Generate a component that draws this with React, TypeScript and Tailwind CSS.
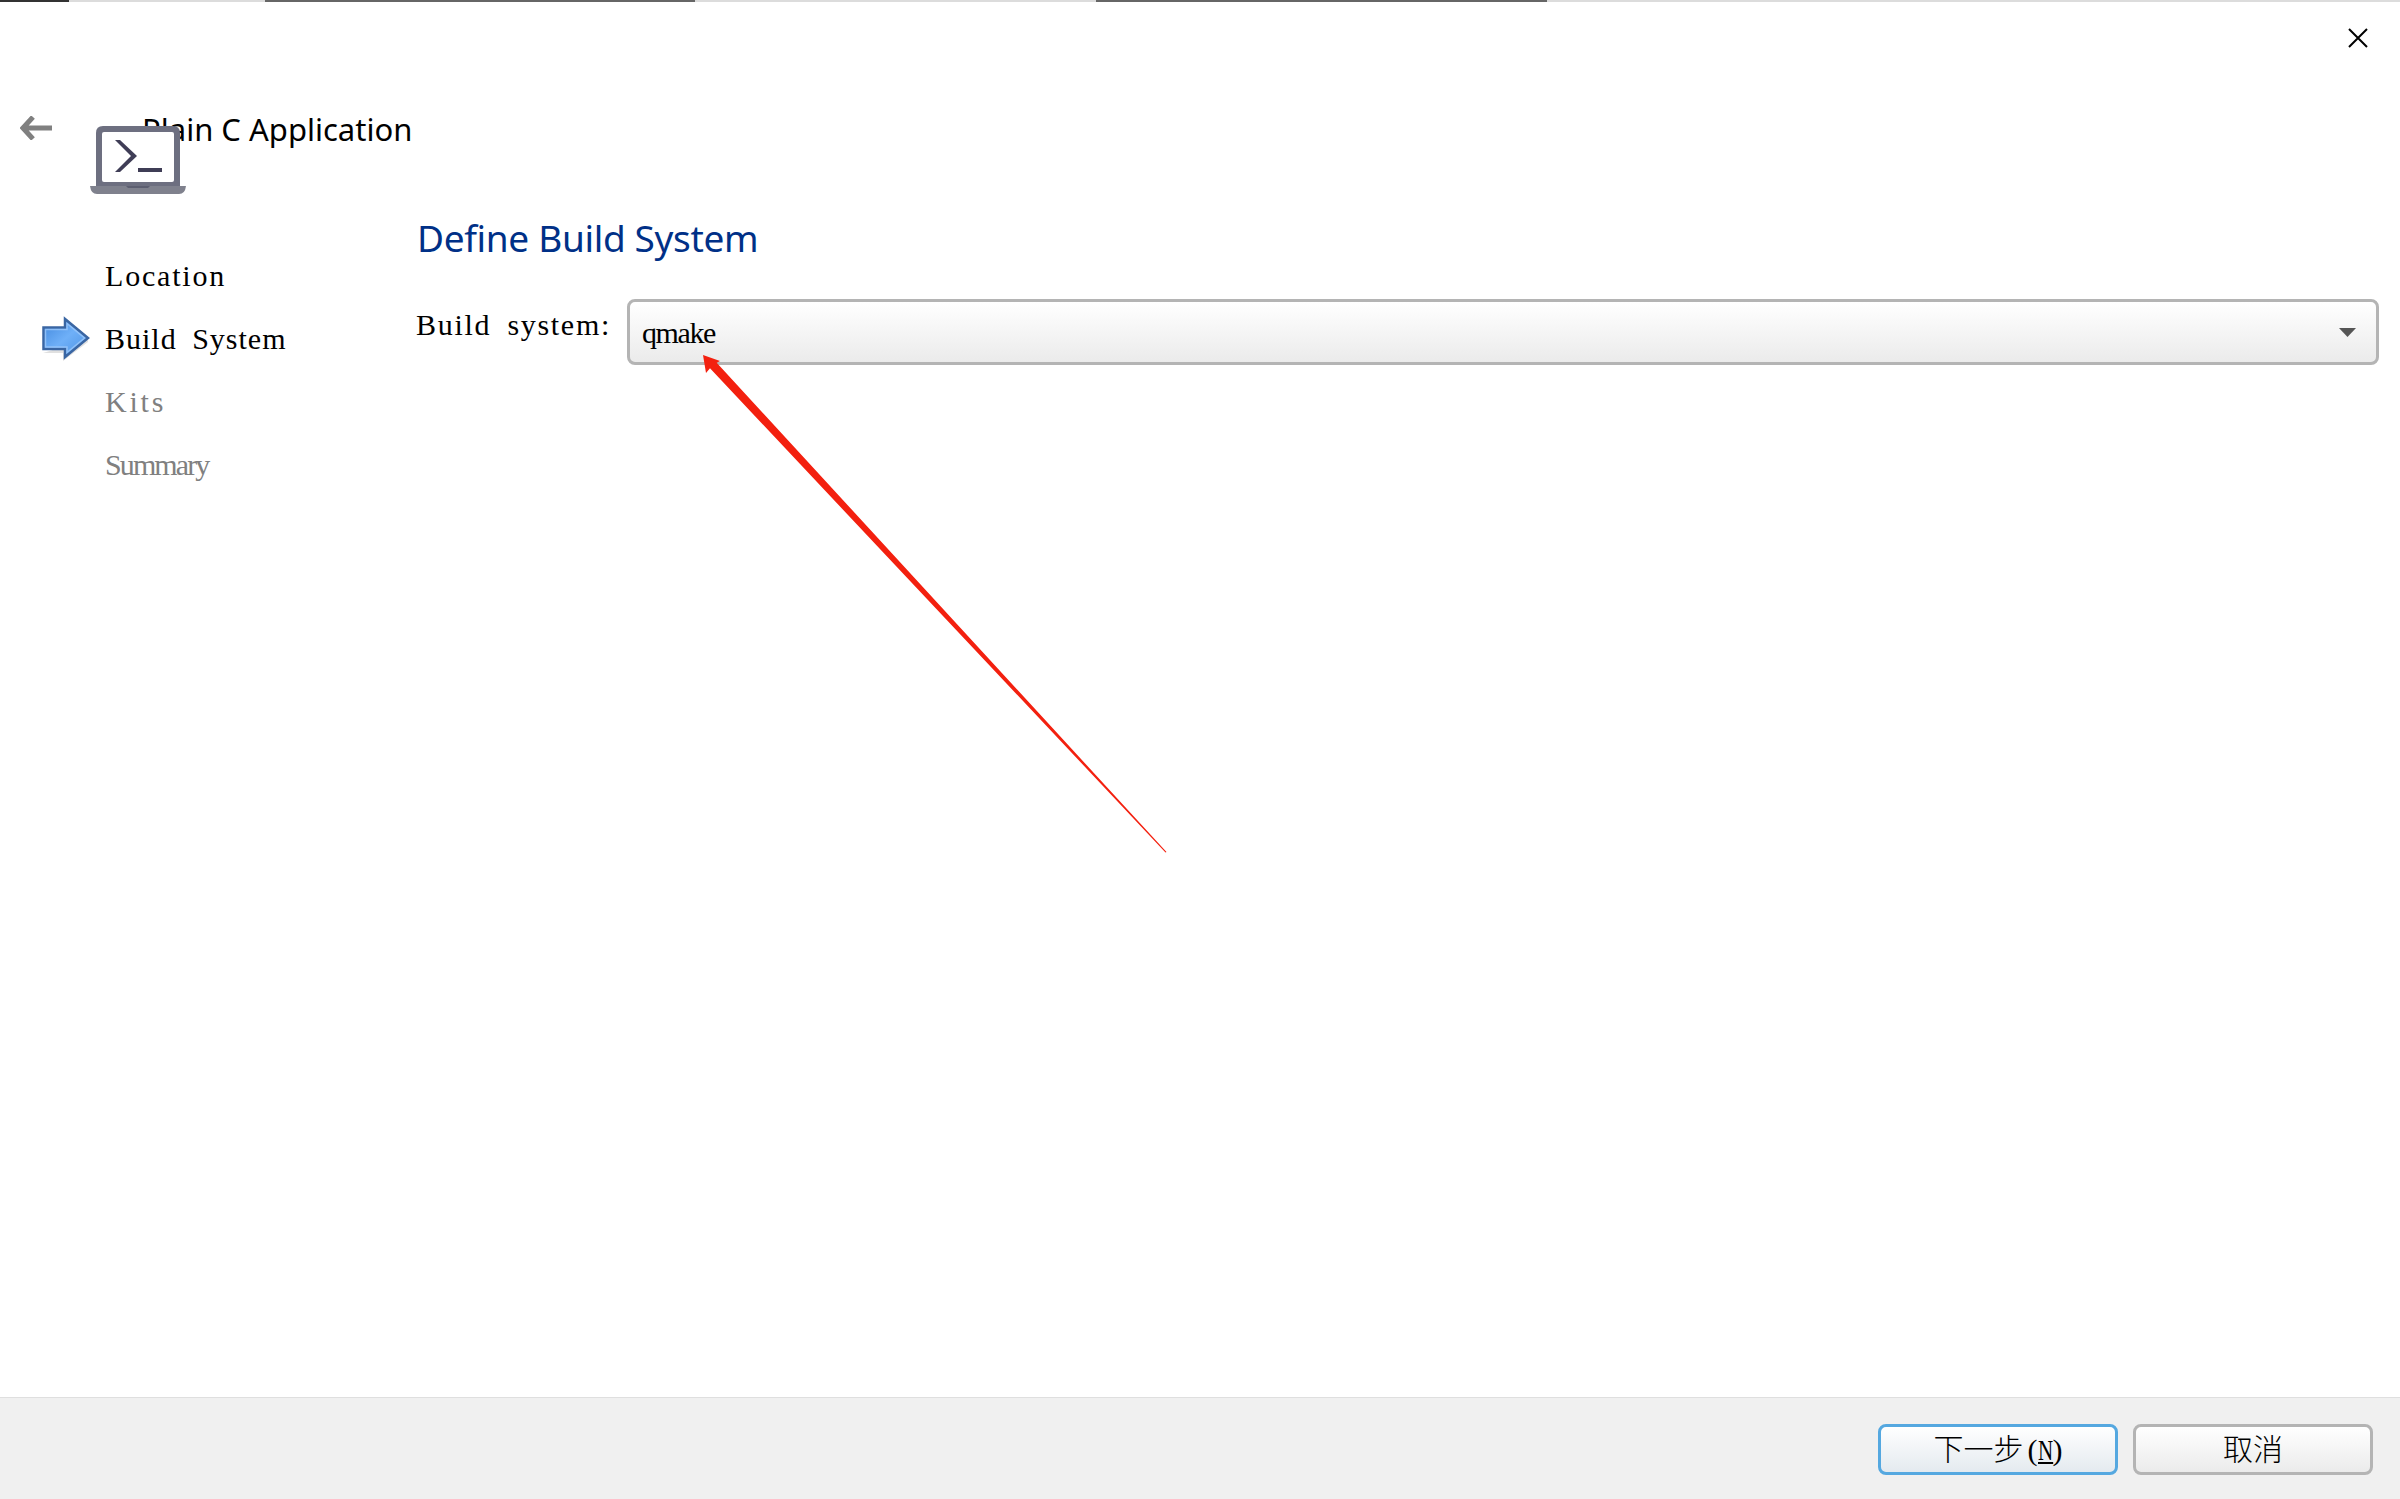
interface Step {
  label: string;
  spacing: string;
  active?: boolean;
  disabled?: boolean;
}

const steps: Step[] = [
  { label: "Location", spacing: "tracking-[1.8px]" },
  {
    label: "Build System",
    spacing: "tracking-[1px] [word-spacing:7px]",
    active: true,
  },
  { label: "Kits", spacing: "tracking-[2.8px]", disabled: true },
  { label: "Summary", spacing: "tracking-[-1.9px]", disabled: true },
];

function BackIcon() {
  return (
    <svg className="w-8 h-6" viewBox="0 0 32 24" fill="none">
      <path d="M13 1 L3 12 L13 23 M3 12 H32" stroke="#808080" strokeWidth="5" />
    </svg>
  );
}

function LaptopIcon() {
  return (
    <svg className="w-24 h-[68px]" viewBox="0 0 96 68">
      <path d="M6 61 V7 Q6 0 13 0 H83 Q90 0 90 7 V61 Z" fill="#6d6f80" />
      <rect x="12" y="6" width="72" height="50" rx="2" fill="#fff" />
      <path d="M0 60 H96 Q95 68 89 68 H7 Q1 68 0 60 Z" fill="#7f818d" />
      <path d="M36 60 H60 L58 62 H38 Z" fill="#5c5e70" />
      <path
        d="M25 14 H30 L47 30 L30 46 H25 L41 30 Z M48 42 H72 V46 H48 Z"
        fill="#3f3d56"
      />
    </svg>
  );
}

function CurrentStepIcon() {
  return (
    <svg className="w-[50px] h-[46px]" viewBox="0 0 50 46">
      <defs>
        <linearGradient id="step" x1="0" y1="0" x2="1" y2="1">
          <stop offset="0" stopColor="#3f86dc" />
          <stop offset="0.5" stopColor="#6fb0f8" />
          <stop offset="1" stopColor="#4a90e2" />
        </linearGradient>
      </defs>
      <path d="M3 37 H23 V45 L48 26 V23 Z" fill="#000" opacity="0.12" />
      <path
        d="M3.5 11.5 H25 V3 L48 22 L25 41 V33 H3.5 Z"
        fill="url(#step)"
        stroke="#3a66a3"
        strokeWidth="2.5"
      />
      <path
        d="M5.5 13.5 H27 V7.5 L44.5 22 L27 36.5 V31 H5.5 Z"
        fill="none"
        stroke="#9cc8fa"
        strokeWidth="1.5"
        opacity="0.8"
      />
    </svg>
  );
}

export default function App() {
  return (
    <div className="relative flex flex-col w-[2400px] h-[1499px] overflow-hidden bg-white text-black font-['Liberation_Serif','Noto_Sans_CJK_SC',serif] text-[30px] leading-[40px]">
      {/* Edge of the window behind */}
      <div className="flex h-0.5 shrink-0 bg-[#dcdcdc]">
        <div className="w-[69px] bg-[#333]" />
        <div className="ml-[196px] w-[430px] bg-[#666]" />
        <div className="ml-[401px] w-[451px] bg-[#666]" />
      </div>

      {/* Title bar */}
      <div className="flex h-[96px] shrink-0 justify-end pt-[26px] pr-[32px]">
        <svg className="w-5 h-5" viewBox="0 0 20 20">
          <path d="M1 1 L19 19 M19 1 L1 19" stroke="#000" strokeWidth="2" />
        </svg>
      </div>

      {/* Wizard header */}
      <header className="flex h-[112px] shrink-0">
        <div className="pt-[18px] pl-5 w-[90px]">
          <BackIcon />
        </div>
        <div className="relative pl-[52px] pt-[11px]">
          <h1 className="font-['Noto_Sans',sans-serif] text-[31px] whitespace-nowrap">
            Plain C Application
          </h1>
          <div className="absolute left-0 top-[28px]">
            <LaptopIcon />
          </div>
        </div>
      </header>

      <main className="flex flex-1">
        <nav className="w-[417px] pt-[34px]">
          {steps.map((step) => (
            <div key={step.label} className="flex items-center h-[63px]">
              <div className="w-[105px] pl-[40px]">
                {step.active && <CurrentStepIcon />}
              </div>
              <span
                className={`whitespace-nowrap ${step.spacing} ${step.disabled ? "text-[#808080]" : ""}`}
              >
                {step.label}
              </span>
            </div>
          ))}
        </nav>

        <section className="flex-1">
          <h2 className="font-['Noto_Sans',sans-serif] text-[37px] leading-[52px] tracking-[-0.33px] text-[#003087] whitespace-nowrap pt-0.5">
            Define Build System
          </h2>
          <div className="flex mt-[35px]">
            <label className="-ml-px w-[211px] pt-[6px] whitespace-nowrap tracking-[1.7px] [word-spacing:7px]">
              Build system:
            </label>
            <div className="flex items-center justify-between w-[1752px] h-[66px] pl-3 pr-[20px] border-[3px] border-[#b4b4b4] rounded-lg bg-linear-to-b from-white to-[#ebebeb]">
              <span className="pt-0.5 tracking-[-1.4px]">qmake</span>
              <svg className="w-[17px] h-[9px]" viewBox="0 0 17 9">
                <path d="M0 0 H17 L8.5 9 Z" fill="#555" />
              </svg>
            </div>
          </div>
        </section>
      </main>

      <footer className="flex justify-end gap-[15px] h-[102px] shrink-0 pt-[26px] pr-[27px] bg-[#f0f0f0] border-t border-[#dfdfdf]">
        <button className="w-[240px] h-[51px] border-[3px] border-[#55a8e0] rounded-lg bg-linear-to-b from-white to-[#e4eaef] font-light leading-none">
          下一步<span className="ml-1">(</span>
          <span className="inline-block w-[15px] origin-left scale-x-[0.7] text-left underline underline-offset-2 decoration-2">
            N
          </span>
          )
        </button>
        <button className="w-[240px] h-[51px] border-[3px] border-[#b4b4b4] rounded-lg bg-linear-to-b from-white to-[#ebebeb] font-light leading-none">
          取消
        </button>
      </footer>

      {/* Annotation arrow pointing at the selected build system */}
      <svg
        className="absolute left-[700px] top-[350px] w-[470px] h-[510px]"
        viewBox="700 350 470 510"
      >
        <path
          d="M703 355 L720 361 L716.7 362.7 L1166.5 852 L1165.5 852.5 L710 368.3 L706 373 Z"
          fill="#f3200f"
        />
      </svg>
    </div>
  );
}
